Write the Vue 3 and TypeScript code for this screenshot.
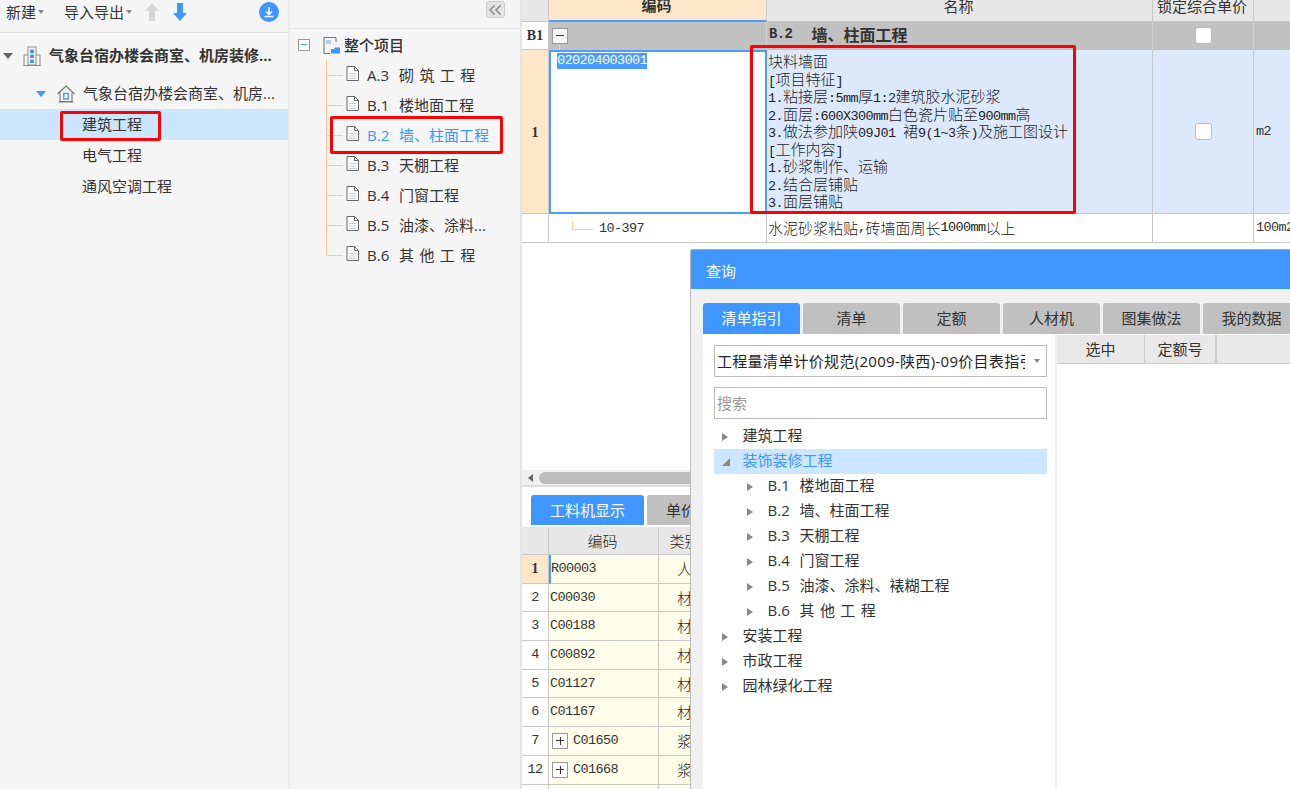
<script setup lang="ts">
// split mixed text so ascii gets the half-width mono face
const parts = (s: string) =>
  (s.match(/[\x00-\x7f]+|[^\x00-\x7f]+/g) ?? []).map((t) => ({
    t,
    ascii: t.charCodeAt(0) < 128
  }))

const outline = [
  { code: 'A.3', name: '砌 筑 工 程' },
  { code: 'B.1', name: '楼地面工程' },
  { code: 'B.2', name: '墙、柱面工程', active: true },
  { code: 'B.3', name: '天棚工程' },
  { code: 'B.4', name: '门窗工程' },
  { code: 'B.5', name: '油漆、涂料...' },
  { code: 'B.6', name: '其 他 工 程' }
]

const nameLines = [
  '块料墙面',
  '[项目特征]',
  '1.粘接层:5mm厚1:2建筑胶水泥砂浆',
  '2.面层:600X300mm白色瓷片贴至900mm高',
  '3.做法参加陕09J01 裙9(1~3条)及施工图设计',
  '[工作内容]',
  '1.砂浆制作、运输',
  '2.结合层铺贴',
  '3.面层铺贴'
]

const materials = [
  { no: '1', code: 'R00003', kind: '人', on: true },
  { no: '2', code: 'C00030', kind: '材' },
  { no: '3', code: 'C00188', kind: '材' },
  { no: '4', code: 'C00892', kind: '材' },
  { no: '5', code: 'C01127', kind: '材' },
  { no: '6', code: 'C01167', kind: '材' },
  { no: '7', code: 'C01650', kind: '浆', more: true },
  { no: '12', code: 'C01668', kind: '浆', more: true },
  { no: '', code: '', kind: '' }
]

const tabs = ['清单指引', '清单', '定额', '人材机', '图集做法', '我的数据']

const guide = [
  { name: '建筑工程' },
  { name: '装饰装修工程', open: true },
  { code: 'B.1', name: '楼地面工程' },
  { code: 'B.2', name: '墙、柱面工程' },
  { code: 'B.3', name: '天棚工程' },
  { code: 'B.4', name: '门窗工程' },
  { code: 'B.5', name: '油漆、涂料、裱糊工程' },
  { code: 'B.6', name: '其 他 工 程' },
  { name: '安装工程' },
  { name: '市政工程' },
  { name: '园林绿化工程' }
]
</script>

<template>
  <div class="app">
    <aside class="project">
      <div class="tools">
        <span class="tool">新建<i class="caret"></i></span>
        <span class="tool wide">导入导出<i class="caret"></i></span>
        <svg class="arrow" width="14" height="18" viewBox="0 0 14 18"><path d="M7 0 14 8H10V18H4V8H0Z" fill="#d6d6d6" /></svg>
        <svg class="arrow down" width="14" height="18" viewBox="0 0 14 18"><path d="M4 0H10V10H14L7 18 0 10H4Z" fill="#4096ff" /></svg>
        <svg class="round" width="20" height="20" viewBox="0 0 20 20">
          <circle cx="10" cy="10" r="10" fill="#4096ff" />
          <path d="M10 5V12M7 9.5 10 12.5 13 9.5M5.5 14.5H14.5" fill="none" stroke="#fff" stroke-width="1.5" />
        </svg>
      </div>
      <div class="tree">
        <div class="node root">
          <i class="tri-down gray"></i>
          <svg class="ico-building" width="20" height="20" viewBox="0 0 20 20">
            <path d="M1 19.5H19M2 19V9H6M18 19V9H14" fill="none" stroke="#888" stroke-width="1" />
            <rect x="6" y="1" width="8" height="18" fill="#fff" stroke="#888" />
            <rect x="8" y="3.5" width="4" height="3.5" fill="#4096ff" />
            <rect x="8" y="8.5" width="4" height="3.5" fill="#4096ff" />
            <rect x="8" y="13.5" width="4" height="3.5" fill="#4096ff" />
          </svg>
          <span class="label">气象台宿办楼会商室、机房装修...</span>
        </div>
        <div class="node second">
          <i class="tri-down blue"></i>
          <svg class="ico-house" width="18" height="18" viewBox="0 0 18 18">
            <path d="M0.5 9 9 1 17.5 9M3 7.5V16.5H15V7.5M1.5 17H16.5" fill="none" stroke="#777" stroke-width="1.1" />
            <rect x="6.8" y="8.5" width="4.4" height="5.5" fill="#fff" stroke="#4096ff" stroke-width="1.4" />
          </svg>
          <span class="label">气象台宿办楼会商室、机房...</span>
        </div>
        <div class="node leaf selected"><span class="label">建筑工程</span><b class="mark"></b></div>
        <div class="node leaf"><span class="label">电气工程</span></div>
        <div class="node leaf"><span class="label">通风空调工程</span></div>
      </div>
    </aside>

    <aside class="outline">
      <div class="outline-top">
        <span class="collapse">
          <svg width="13" height="10" viewBox="0 0 13 10"><path d="M5.5 .5 1 5 5.5 9.5M11.5 .5 7 5 11.5 9.5" fill="none" stroke="#888" stroke-width="1.5" /></svg>
        </span>
      </div>
      <div class="outline-root">
        <span class="minus"></span>
        <svg class="ico-tree" width="18" height="17" viewBox="0 0 18 17">
          <path d="M13 .5H1V16.5H7M13 .5V5" fill="none" stroke="#777" stroke-width="1.1" />
          <rect x="3" y="3" width="5" height="4" fill="#a9cfff" />
          <path d="M8 16V12H11L12 10.5H17V16.5H8Z" fill="#4096ff" />
        </svg>
        <span>整个项目</span>
      </div>
      <ul class="sections">
        <li v-for="s in outline" :key="s.code" :class="{ active: s.active }">
          <svg class="ico-file" width="13" height="15" viewBox="0 0 13 15">
            <path d="M1 .5H8.5L12.5 4.5V14.5H1ZM8.5 .5V4.5H12.5" fill="#fff" stroke="#666" />
            <path d="M3 7.5H10.5M3 10H10.5M3 12.5H10.5" stroke="#ccc" />
          </svg>
          <span class="code">{{ s.code }}</span>
          <span class="title">{{ s.name }}</span>
          <b v-if="s.active" class="mark"></b>
        </li>
      </ul>
    </aside>

    <main class="work">
      <div class="sheet">
        <div class="cell head"></div>
        <div class="cell head code-head">编码</div>
        <div class="cell head">名称</div>
        <div class="cell head">锁定综合单价</div>
        <div class="cell head">单位</div>

        <div class="cell rowno plain bold">B1</div>
        <div class="cell group"><span class="box minus-box"></span></div>
        <div class="cell group group-name">
          <span class="ascii">B.2</span><span class="group-title">墙、柱面工程</span>
        </div>
        <div class="cell group center"><span class="check"></span></div>
        <div class="cell group"></div>

        <div class="cell rowno peach bold">1</div>
        <div class="cell current"><span class="picked ascii">020204003001</span></div>
        <div class="cell desc">
          <div v-for="line in nameLines" :key="line" class="line">
            <span v-for="(p, i) in parts(line)" :key="i" :class="{ ascii: p.ascii }">{{ p.t }}</span>
          </div>
        </div>
        <div class="cell desc-side center"><span class="check"></span></div>
        <div class="cell desc-side unit ascii">m2</div>

        <div class="cell rowno plain"></div>
        <div class="cell sub-code"><i class="elbow"></i><span class="ascii">10-397</span></div>
        <div class="cell sub-name">
          <span v-for="(p, i) in parts('水泥砂浆粘贴,砖墙面周长1000mm以上')" :key="i" :class="{ ascii: p.ascii }">{{ p.t }}</span>
        </div>
        <div class="cell plain"></div>
        <div class="cell plain unit ascii">100m2</div>

        <b class="mark sheet-mark"></b>
      </div>

      <div class="hscroll">
        <i class="tri-left"></i>
        <span class="thumb"></span>
      </div>

      <div class="lower-tabs">
        <span class="ltab on">工料机显示</span>
        <span class="ltab">单价构成</span>
      </div>

      <div class="materials">
        <div class="mcell mhead"></div>
        <div class="mcell mhead mhead-code">编码</div>
        <div class="mcell mhead">类别</div>
        <div class="mcell mhead"></div>
        <template v-for="m in materials" :key="m.no">
          <div class="mcell mno" :class="{ peach: m.on, bold: m.on }"><span class="ascii">{{ m.no }}</span></div>
          <div class="mcell mcode" :class="{ focus: m.on }">
            <span v-if="m.more" class="box plus-box"></span>
            <span class="ascii">{{ m.code }}</span>
          </div>
          <div class="mcell mkind">{{ m.kind }}</div>
          <div class="mcell mkind"></div>
        </template>
      </div>
    </main>

    <section class="dialog">
      <header class="dialog-title">查询</header>
      <div class="dialog-tabs">
        <span v-for="(t, i) in tabs" :key="t" class="dtab" :class="{ on: i === 0 }">{{ t }}</span>
      </div>
      <div class="dialog-body">
        <div class="pane">
          <div class="select">
            <span class="select-text">工程量清单计价规范(2009-陕西)-09价目表指引</span>
            <i class="caret"></i>
          </div>
          <div class="search">搜索</div>
          <ul class="guide">
            <li v-for="g in guide" :key="g.name" :class="{ open: g.open, sub: g.code }">
              <i :class="g.open ? 'tri-corner' : 'tri-right'"></i>
              <span v-if="g.code" class="code">{{ g.code }}</span>
              <span class="title">{{ g.name }}</span>
            </li>
          </ul>
        </div>
        <div class="results">
          <div class="results-head">
            <span class="rh pick">选中</span>
            <span class="rh quota">定额号</span>
            <span class="rh rest"></span>
          </div>
        </div>
      </div>
    </section>
  </div>
</template>

<style scoped>
.app {
  position: relative;
  display: flex;
  width: 1290px;
  height: 789px;
  overflow: hidden;
  background: #fff;
  color: #333;
  font: 15px/20px "Open Sans", "Noto Sans CJK SC", sans-serif;
}

ul {
  margin: 0;
  padding: 0;
  list-style: none;
}

.ascii {
  font-family: "Liberation Mono", monospace;
  font-size: 13.5px;
  letter-spacing: -0.6px;
}

.bold {
  font-weight: 700;
}

/* annotation frames */
.mark {
  position: absolute;
  box-sizing: border-box;
  border: 3px solid #f00;
  border-radius: 2px;
  pointer-events: none;
}

/* project tree */
.project {
  flex: none;
  box-sizing: border-box;
  width: 290px;
  background: #f5f5f5;
  border-right: 2px solid #ebebeb;
}

.tools {
  display: flex;
  align-items: center;
  box-sizing: border-box;
  height: 33px;
  padding: 0 9px 9px 6px;
  border-bottom: 1px solid #e2e2e2;
}

.tool {
  display: flex;
  align-items: center;
  gap: 2px;
}

.tool.wide {
  margin-left: 20px;
}

.caret {
  display: block;
  width: 0;
  height: 0;
  border: 3.5px solid transparent;
  border-top: 4px solid #888;
  border-bottom: 0;
}

.arrow {
  margin-left: 13px;
}

.arrow.down {
  margin-left: 14px;
}

.round {
  margin-left: auto;
}

.tree {
  padding-top: 7px;
}

.node {
  position: relative;
  display: flex;
  align-items: center;
  height: 31px;
  white-space: nowrap;
}

.label {
  margin-top: -2px;
}

.root {
  margin-bottom: 7px;
  padding-left: 3px;
  font-weight: 700;
}

.second {
  padding-left: 36px;
}

.leaf {
  padding-left: 82px;
}

.selected {
  background: #cbe6fe;
}

.selected .mark {
  left: 60px;
  top: 2px;
  width: 101px;
  height: 30px;
}

.tri-down {
  display: block;
  flex: none;
  width: 0;
  height: 0;
  border: 5px solid transparent;
  border-bottom: 0;
  border-top: 6px solid #666;
}

.tri-down.blue {
  border-top-color: #4096ff;
}

.ico-building {
  margin: 0 7px 0 9px;
}

.ico-house {
  margin: 0 8px 0 11px;
}

/* section outline */
.outline {
  flex: none;
  box-sizing: border-box;
  width: 232px;
  background: #f5f5f5;
  border-right: 2px solid #e4e4e4;
}

.outline-top {
  display: flex;
  justify-content: flex-end;
  box-sizing: border-box;
  height: 29px;
  padding: 1px 15px 0 0;
  border-bottom: 1px solid #e6e6e6;
}

.collapse {
  display: flex;
  align-items: center;
  justify-content: center;
  width: 19px;
  height: 17px;
  background: #e4e4e4;
  border: 1px solid #ccc;
  border-radius: 3px;
  box-sizing: border-box;
}

.outline-root {
  display: flex;
  align-items: center;
  height: 30px;
  margin-top: 1px;
  padding-left: 8px;
  font-weight: 500;
}

.minus {
  position: relative;
  box-sizing: border-box;
  width: 12px;
  height: 12px;
  margin-right: 13px;
  background: #fff;
  border: 1px solid #999;
}

.minus::after {
  content: "";
  position: absolute;
  left: 2px;
  right: 2px;
  top: 4px;
  height: 1px;
  background: #4096ff;
}

.ico-tree {
  margin-right: 3px;
}

.sections {
  margin-left: 36px;
}

.sections li {
  position: relative;
  display: flex;
  align-items: center;
  height: 30px;
  padding-left: 20px;
  white-space: pre;
}

.sections li::before {
  content: "";
  position: absolute;
  left: 1px;
  top: 15px;
  width: 16px;
  height: 1px;
  background: #fcc88c;
}

.sections li::after {
  content: "";
  position: absolute;
  left: 0;
  top: 0;
  width: 1px;
  height: 100%;
  background: #fcc88c;
}

.sections li:last-child::after {
  height: 15px;
}

.sections .ico-file {
  margin-right: 8px;
  margin-top: -4px;
}

.sections .code,
.guide .code {
  flex: none;
  width: 32px;
  font-weight: 500;
}

.title {
  word-spacing: 1.5px;
}

.sections .active {
  color: #4096ff;
}

.sections .active .mark {
  left: 4px;
  top: -4px;
  width: 173px;
  height: 38px;
}

/* quantity sheet */
.work {
  flex: 1;
  min-width: 0;
  display: flex;
  flex-direction: column;
  font-family: "Noto Sans CJK SC", sans-serif;
}

.sheet {
  position: relative;
  flex: none;
  display: grid;
  grid-template-columns: 27px 218px 386px 101px 120px;
  grid-template-rows: 22px 28px 164px 29px;
  align-content: start;
  height: 470px;
}

.sheet-mark {
  left: 228px;
  top: 45px;
  width: 326px;
  height: 169px;
}

.cell {
  box-sizing: border-box;
  display: flex;
  align-items: center;
  min-width: 0;
  overflow: hidden;
  border-right: 1px solid #c8c8c8;
  border-bottom: 1px solid #c8c8c8;
  white-space: pre;
}

.head {
  justify-content: center;
  align-items: flex-end;
  padding: 0 2px 5px 0;
  background: #e7e7e7;
  line-height: 20px;
}

.code-head {
  background: #fde6c9;
  border-bottom: 2px solid #4a9cff;
  font-weight: 700;
}

.rowno {
  justify-content: center;
  font-family: "Liberation Serif", serif;
  font-size: 14px;
}

.plain {
  background: #fff;
}

.peach {
  background: #fde6c9;
}

.rowno.peach {
  padding-top: 2px;
}

.group {
  background: #c1c1c1;
  border-right-color: #d2d2d2;
  border-bottom-color: #c1c1c1;
}

.group-name {
  padding: 0 0 3px 2px;
  font-size: 16px;
  font-weight: 700;
}

.group-name .ascii {
  font-size: 14px;
  font-weight: 700;
}

.group-title {
  margin-left: 19px;
}

.center {
  justify-content: center;
}

.box {
  position: relative;
  flex: none;
  box-sizing: border-box;
  width: 16px;
  height: 16px;
  margin-left: 3px;
  background: #f4f4f4;
  border: 1px solid #9a9a9a;
}

.box::before,
.plus-box::after {
  content: "";
  position: absolute;
  left: 3px;
  top: 6px;
  width: 8px;
  height: 1px;
  background: #333;
}

.plus-box::after {
  left: 6.5px;
  top: 3px;
  width: 1px;
  height: 8px;
}

.minus-box::after {
  content: "";
  position: absolute;
  left: 6px;
  top: 15px;
  width: 1px;
  height: 6px;
  background: #fcc88c;
}

.group:has(.minus-box) {
  overflow: visible;
}

.check {
  box-sizing: border-box;
  width: 17px;
  height: 17px;
  background: #fff;
  border: 1px solid #bbb;
  border-radius: 3px;
}

.current {
  align-items: flex-start;
  padding: 1px 0 0 6px;
  border: 2px solid #4a9cff;
}

.picked {
  background: #4a9cff;
  color: #fff;
  line-height: 16px;
}

.desc {
  display: block;
  padding: 2px 0 0 1px;
  background: #dce9fd;
}

.line {
  height: 17.5px;
  line-height: 17.5px;
  font-weight: 300;
  color: #222;
}

.desc-side {
  background: #dce9fd;
}

.unit {
  padding-left: 2px;
}

.sub-code {
  padding-left: 23px;
  padding-top: 1px;
}

.elbow {
  display: block;
  flex: none;
  align-self: flex-start;
  width: 20px;
  height: 7px;
  margin: 7px 6px 0 0;
  border-left: 1px solid #fcc88c;
  border-bottom: 1px solid #fcc88c;
}

.sub-name {
  padding-left: 1px;
  font-weight: 300;
  color: #222;
}

.hscroll {
  flex: none;
  display: flex;
  align-items: center;
  gap: 6px;
  box-sizing: border-box;
  height: 17px;
  padding-left: 6px;
  background: #f0f0f0;
  border-bottom: 2px solid #ddd;
}

.tri-left {
  display: block;
  width: 0;
  height: 0;
  border: 4px solid transparent;
  border-left: 0;
  border-right: 5px solid #666;
}

.thumb {
  width: 500px;
  height: 12px;
  background: #bdbdbd;
  border-radius: 6px;
}

.lower-tabs {
  flex: none;
  display: flex;
  gap: 3px;
  height: 32px;
  margin-top: 8px;
  padding-left: 9px;
}

.ltab {
  flex: none;
  box-sizing: border-box;
  height: 30px;
  padding: 0 19px;
  background: #c0c0c0;
  border-radius: 3px 3px 0 0;
  line-height: 29px;
  white-space: nowrap;
}

.ltab.on {
  background: #4096ff;
  color: #fff;
}

.materials {
  display: grid;
  grid-template-columns: 27px 110px 52px 100px;
  grid-template-rows: 28px;
  grid-auto-rows: 28.7px;
}

.mcell {
  box-sizing: border-box;
  display: flex;
  align-items: center;
  min-width: 0;
  overflow: hidden;
  border-right: 1px solid #c8c8c8;
  border-bottom: 1px solid #c8c8c8;
  white-space: pre;
}

.mhead {
  justify-content: center;
  background: #e7e7e7;
  font-weight: 300;
  color: #222;
}

.mhead-code {
  padding-right: 2px;
}

.mno {
  justify-content: center;
  background: #fff;
}

.mno.peach {
  background: #fde6c9;
}

.mno.bold .ascii {
  font-family: "Liberation Serif", serif;
  font-size: 14px;
  font-weight: 700;
  letter-spacing: 0;
}

.mcode {
  gap: 5px;
  padding-left: 1px;
  background: #fffeea;
}

.mcode.focus {
  border-left: 2px solid #4a9cff;
  padding-left: 0;
}

.mcode .box {
  margin-left: 2px;
  background: #fff;
}

.mkind {
  justify-content: center;
  background: #fffeea;
  font-weight: 300;
  color: #222;
}

/* query dialog */
.dialog {
  position: absolute;
  left: 690px;
  top: 249px;
  box-sizing: border-box;
  display: flex;
  flex-direction: column;
  width: 720px;
  height: 600px;
  background: #f0f0f0;
  border-top: 1px solid #aaa;
  border-left: 1px solid #bbb;
  border-radius: 3px 0 0 0;
}

.dialog-title {
  flex: none;
  height: 39px;
  padding-left: 15px;
  background: #4096ff;
  color: #fff;
  line-height: 42px;
}

.dialog-tabs {
  flex: none;
  display: flex;
  gap: 3px;
  height: 31px;
  margin-top: 14px;
  padding-left: 12px;
}

.dtab {
  flex: none;
  width: 97px;
  background: #c0c0c0;
  border-radius: 3px 3px 0 0;
  line-height: 30px;
  text-align: center;
}

.dtab.on {
  background: #4096ff;
  color: #fff;
}

.dialog-body {
  flex: 1;
  display: flex;
  gap: 2px;
  margin-left: 12px;
}

.pane {
  flex: none;
  box-sizing: border-box;
  width: 352px;
  padding: 11px 8px 0 11px;
  background: #fff;
}

.select,
.search {
  box-sizing: border-box;
  height: 32px;
  background: #fff;
  border: 1px solid #bbb;
}

.select {
  display: flex;
  align-items: center;
  justify-content: space-between;
  padding: 0 6px 0 2px;
}

.select-text {
  width: 308px;
  margin-top: -1px;
  overflow: hidden;
  white-space: nowrap;
  letter-spacing: 0.3px;
  color: #222;
}

.search {
  margin-top: 10px;
  padding-left: 2px;
  color: #999;
  line-height: 30px;
}

.guide {
  margin-top: 5px;
}

.guide li {
  display: flex;
  align-items: center;
  height: 25px;
  padding-left: 8px;
  white-space: pre;
}

.guide li .title,
.guide li .code {
  margin-top: -3px;
}

.guide li.sub {
  padding-left: 33px;
}

.guide li.open {
  background: #cbe6fe;
  color: #4096ff;
}

.tri-right {
  display: block;
  flex: none;
  width: 0;
  height: 0;
  margin-right: 14.5px;
  border: 4.5px solid transparent;
  border-right: 0;
  border-left: 6px solid #888;
}

.tri-corner {
  display: block;
  flex: none;
  width: 0;
  height: 0;
  margin-right: 12.5px;
  border-style: solid;
  border-width: 0 0 8px 8px;
  border-color: transparent transparent #888 transparent;
}

.results {
  flex: 1;
  background: #fff;
}

.results-head {
  display: flex;
  height: 28px;
  margin-top: 1px;
  background: #e8e8e8;
  border-bottom: 1px solid #ccc;
}

.rh {
  box-sizing: border-box;
  border-right: 1px solid #ccc;
  line-height: 28px;
  text-align: center;
}

.pick {
  width: 88px;
}

.quota {
  width: 71px;
}
</style>

<style>
html,
body {
  margin: 0;
  overflow: hidden;
}
</style>
